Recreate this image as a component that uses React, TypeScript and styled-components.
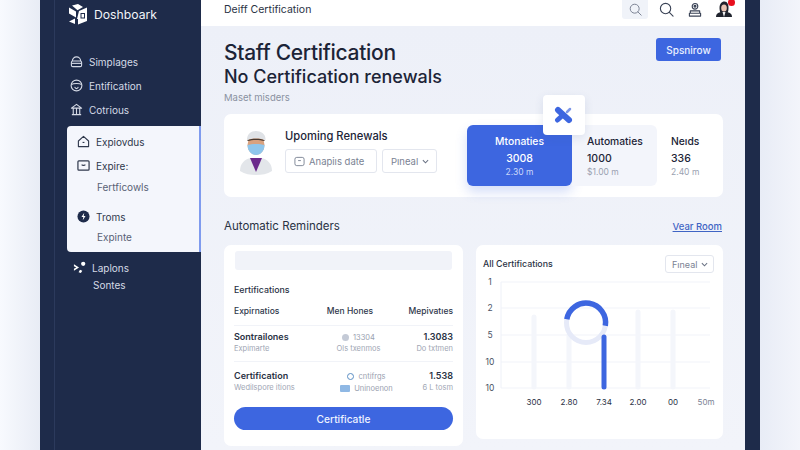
import React from 'react';
import styled, {createGlobalStyle} from "styled-components";

const GlobalStyle = createGlobalStyle`
    html, body {
        margin: 0;
        padding: 0;
        width: 800px;
        height: 450px;
        overflow: hidden;
        background: #f0f3fa;
        font-family: Inter, "Liberation Sans", sans-serif;
    }
    * { box-sizing: border-box; }
    svg { flex: none; }
`

const NAVY = "#1e2b4a";
const BLUE = "#3d66e0";
const INK = "#1c2437";

const Home = () => (
    <svg width="13" height="13" viewBox="0 0 14 14" fill="none" stroke="currentColor" strokeWidth="1.2">
        <path d="M1.5 6.5 7 1.5l5.5 5v6h-11z" strokeLinejoin="round"/>
        <path d="M6 8h2" />
    </svg>
);
const Dome = () => (
    <svg width="13" height="13" viewBox="0 0 14 14" fill="none" stroke="currentColor" strokeWidth="1.2">
        <path d="M2.5 6.5a4.5 4.5 0 0 1 9 0" />
        <rect x="1.5" y="6.5" width="11" height="6" rx="1.5" />
        <path d="M1.5 9h11" />
    </svg>
);
const Gauge = () => (
    <svg width="13" height="13" viewBox="0 0 14 14" fill="none" stroke="currentColor" strokeWidth="1.2">
        <circle cx="7" cy="7" r="5.8" />
        <path d="M1.5 6c2-1.5 9-1.5 11 0M5 8.5c1 2.5 3 2.5 4 0" />
    </svg>
);
const Bank = () => (
    <svg width="13" height="13" viewBox="0 0 14 14" fill="none" stroke="currentColor" strokeWidth="1.2">
        <path d="M1.5 5.5 7 1.5l5.5 4zM2 12.5h10M3.5 6v6M7 6v6M10.5 6v6" strokeLinejoin="round"/>
    </svg>
);
const Inbox = () => (
    <svg width="13" height="13" viewBox="0 0 14 14" fill="none" stroke="currentColor" strokeWidth="1.3">
        <rect x="1" y="2" width="12" height="10" rx="1"/>
        <path d="M5 6c1 1.2 3 1.2 4 0" />
    </svg>
);
const Bolt = () => (
    <svg width="13" height="13" viewBox="0 0 14 14">
        <circle cx="7" cy="7" r="6.5" fill={NAVY}/>
        <path d="M7.8 3 4.8 7.5h2L6.2 11l3-4.5h-2z" fill="#fff"/>
    </svg>
);
const Nodes = () => (
    <svg width="13" height="13" viewBox="0 0 14 14" fill="#fff">
        <circle cx="11" cy="3" r="2.3"/>
        <path d="M1 3.5 6.5 7 1 10.5V8.3L3.5 7 1 5.7zM7.5 9.5l2.5 1-1.5 2.5-2.5-.8z"/>
    </svg>
);
const Logo = () => (
    <svg width="21" height="21" viewBox="0 0 21 21" fill="#fff">
        <path d="M1 3.5 8 7.5v6L1 9.5zM4 1.5 10 0l5 3-5.5 3.2zM11 7l8-3.5V17l-9 3.5V15l-1 0z"/>
        <path d="M1 17.5 7 14.5v5.5z"/>
        <rect x="13" y="9.5" width="3.5" height="4.5" fill="none" stroke={NAVY} strokeWidth="1"/>
    </svg>
);
const Search = ({size = 15, color = "#3a4356"}: {size?: number, color?: string}) => (
    <svg width={size} height={size} viewBox="0 0 16 16" fill="none" stroke={color} strokeWidth="1.2">
        <circle cx="7" cy="7" r="5.5"/>
        <path d="m11 11 4 4" strokeLinecap="round"/>
    </svg>
);
const Person = () => (
    <svg width="14" height="16" viewBox="0 0 15 16" fill="none" stroke="#3a4356" strokeWidth="1.2">
        <circle cx="7.5" cy="4" r="3"/>
        <circle cx="7.5" cy="4" r="1" fill="#3a4356"/>
        <path d="M2.5 9h10v2.5h-10zM1.5 11.5h12v3h-12z" strokeLinejoin="round"/>
    </svg>
);
const UserPhoto = () => (
    <svg width="16" height="17" viewBox="0 0 16 17">
        <path d="M0 16c0-4 3-5 8-5s8 1 8 5z" fill="#20242e"/>
        <path d="M3.5 7c0-4 2-6.5 5-6.5s4 3 4 6.500-1 5-1 5h-7s-1-2-1-5z" fill="#20242e"/>
        <ellipse cx="8" cy="7" rx="2.8" ry="3.5" fill="#e9c4b4"/>
        <path d="M6.5 11h3L8 16z" fill="#f3f3f3"/>
    </svg>
);
const Nurse = () => (
    <svg width="34" height="46" viewBox="0 0 34 46">
        <path d="M1 41c0-8 5-12 11-13h10c6 1 11 5 11 13-5 3-10 4-16 4S6 44 1 41z" fill="#e3e6ea"/>
        <path d="M11 28h12l-6 14z" fill="#6b2a8c"/>
        <ellipse cx="17" cy="15" rx="8.5" ry="10" fill="#d9a27f"/>
        <path d="M8 10C8 4 12 1 17 1s10 3 9.5 9c-5-2-13.5-2-18.500 0z" fill="#dfe2e6"/>
        <path d="M8.500 10c5-1.800 12-1.800 17 0v1c-5-1.500-12-1.500-17 0z" fill="#4a3a30"/>
        <path d="M8.500 15c4-1.500 13-1.500 17 0 0 5.500-3.500 10-8.500 10s-8.500-4.500-8.500-10z" fill="#8fc6ec"/>
    </svg>
);
const Calendar = () => (
    <svg width="11" height="11" viewBox="0 0 12 12" fill="none" stroke="#7a8293" strokeWidth="1">
        <rect x="1" y="1.5" width="10" height="9" rx="2"/>
        <path d="M4.5 5h3"/>
    </svg>
);
const Chevron = () => (
    <svg width="7" height="5" viewBox="0 0 8 5" fill="none" stroke="#6b7385" strokeWidth="1.2">
        <path d="m1 1 3 3 3-3"/>
    </svg>
);
const Cross = () => (
    <svg width="20" height="18" viewBox="0 0 20 18" fill="none" strokeLinecap="round">
        <line x1="4" y1="4" x2="15" y2="14" stroke={BLUE} strokeWidth="6"/>
        <line x1="3.5" y1="14" x2="9" y2="9" stroke={BLUE} strokeWidth="5"/>
        <line x1="13" y1="6" x2="16" y2="3" stroke="#7d97e8" strokeWidth="2.5"/>
    </svg>
);
const Chart = () => (
    <svg width="240" height="150" viewBox="0 0 240 150" fontFamily="Inter, sans-serif" fontSize="8.5" fill="#2a3244">
        {[5, 31, 58, 85, 111].map((y, i) => (
            <g key={y}>
                <line x1="18" x2="227" y1={y} y2={y} stroke="#f1f3f9" strokeWidth="1"/>
                <text x="7" y={y + 3} textAnchor="middle" fill="#4a5264">{["1", "2", "5", "10", "10"][i]}</text>
            </g>
        ))}
        <line x1="18" x2="18" y1="5" y2="111" stroke="#eef1f8"/>
        {[[51, 40], [86, 58], [155, 35], [190, 35]].map(([x, y]) => (
            <line key={x} x1={x} x2={x} y1={y} y2="110" stroke="#f4f6fb" strokeWidth="5" strokeLinecap="round"/>
        ))}
        <circle cx="103" cy="46" r="19.5" fill="none" stroke="#e6eaf8" strokeWidth="5"/>
        <path d="M83.8 42.3A19.5 19.5 0 0 1 122.3 48.8" fill="none" stroke={BLUE} strokeWidth="5.5"/>
        <line x1="121" x2="121" y1="60" y2="110" stroke={BLUE} strokeWidth="5" strokeLinecap="round"/>
        {[["300", 51], ["2.80", 86], ["7.34", 121], ["2.00", 155], ["00", 190]].map(([t, x]) => (
            <text key={t} x={x} y="128" textAnchor="middle" fontSize="8">{t}</text>
        ))}
        <text x="223" y="128" textAnchor="middle" fontSize="8" fill="#7a8293">50m</text>
    </svg>
);

const navTop = [
    {icon: <Dome/>, label: "Simplages"},
    {icon: <Gauge/>, label: "Entification"},
    {icon: <Bank/>, label: "Cotrious"},
];

export default function App() {
    return (
        <>
            <GlobalStyle/>
            <Page>
                <Gutter $from="#f8fafe" $to="#e8ecf5"/>
                <Sidebar>
                    <Brand><Logo/><BrandName>Doshboark</BrandName></Brand>
                    <NavTop>
                        {navTop.map(n => <NavItem key={n.label}>{n.icon}<span>{n.label}</span></NavItem>)}
                    </NavTop>
                    <ActivePanel>
                        <PanelItem><Home/><span>Expiovdus</span></PanelItem>
                        <PanelItem $top={9}><Inbox/><span>Expire:</span></PanelItem>
                        <PanelSub $top={8}>Fertficowls</PanelSub>
                        <PanelItem $top={15}><Bolt/><span>Troms</span></PanelItem>
                        <PanelSub $top={7}>Expinte</PanelSub>
                    </ActivePanel>
                    <NavBottom>
                        <NavItem><Nodes/><span>Laplons</span></NavItem>
                        <NavSub>Sontes</NavSub>
                    </NavBottom>
                </Sidebar>
                <Main>
                    <TopBar>
                        <TopTitle>Deiff Certification</TopTitle>
                        <TopIcons>
                            <SearchChip><Search size={13} color="#7a8293"/></SearchChip>
                            <Search/>
                            <Person/>
                            <Avatar><UserPhoto/><RedDot/></Avatar>
                        </TopIcons>
                    </TopBar>
                    <Content>
                        <Hero>
                            <div>
                                <H1>Staff Certification</H1>
                                <H2>No Certification renewals</H2>
                                <Muted>Maset misders</Muted>
                            </div>
                            <PrimarySmall>Spsnirow</PrimarySmall>
                        </Hero>
                        <StatsCard>
                            <FloatTile><Cross/></FloatTile>
                            <NurseBox><Nurse/></NurseBox>
                            <Renewals>
                                <CardTitle>Upoming Renewals</CardTitle>
                                <Filters>
                                    <Select $w={92}><Calendar/>Anapiıs date</Select>
                                    <Select $w={55} $between>Pıneal<Chevron/></Select>
                                </Filters>
                            </Renewals>
                            <Tiles>
                                <BlueTile>
                                    <b>Mtonaties</b>
                                    <strong>3008</strong>
                                    <small>2.30 m</small>
                                </BlueTile>
                                <GreyTile>
                                    <b>Automaties</b>
                                    <strong>1000</strong>
                                    <small>$1.00 m</small>
                                </GreyTile>
                                <PlainTile>
                                    <b>Neıds</b>
                                    <strong>336</strong>
                                    <small>2.40 m</small>
                                </PlainTile>
                            </Tiles>
                        </StatsCard>
                        <SectionHead>
                            <SectionTitle>Automatic Reminders</SectionTitle>
                            <ViewLink href="#">Vear Room</ViewLink>
                        </SectionHead>
                        <Columns>
                            <TableCard>
                                <GreyBar/>
                                <TableTitle>Eertifications</TableTitle>
                                <HeadRow>
                                    <span>Expirnatios</span>
                                    <HeadMiddle>Men Hones</HeadMiddle>
                                    <span>Mepivatıes</span>
                                </HeadRow>
                                <Row>
                                    <div><RowName>Sontrailones</RowName><RowSub>Expimarte</RowSub></div>
                                    <Middle>
                                        <MidLine><Dot/>13304</MidLine>
                                        <RowSub>Ols txenmos</RowSub>
                                    </Middle>
                                    <Right><RowName>1.3083</RowName><RowSub>Do txtmen</RowSub></Right>
                                </Row>
                                <Row $last>
                                    <div><RowName>Certification</RowName><RowSub>Wedilspore itions</RowSub></div>
                                    <Middle $shift={16}>
                                        <MidLine><Ring/>cntifrgs</MidLine>
                                        <MidLine><Mini/>Uninoenon</MidLine>
                                    </Middle>
                                    <Right><RowName>1.538</RowName><RowSub>6 L tosm</RowSub></Right>
                                </Row>
                                <WideButton>Certificatle</WideButton>
                            </TableCard>
                            <ChartCard>
                                <ChartHead>
                                    <TableTitle as="div">All Certifications</TableTitle>
                                    <Select $w={49} $h={18} $between $tight>Fıneal<Chevron/></Select>
                                </ChartHead>
                                <Chart/>
                            </ChartCard>
                        </Columns>
                    </Content>
                </Main>
                <Strip/>
                <Gutter $from="#e8ecf6" $to="#f3f5fb"/>
            </Page>
        </>
    );
}

const Page = styled.div`
    display: flex;
    width: 800px;
    height: 450px;
    overflow: hidden;
    background: #eef1f8;
`
const Gutter = styled.div<{$from: string, $to: string}>`
    flex: 1;
    background: linear-gradient(90deg, ${props => props.$from}, ${props => props.$to});
`
const Strip = styled.div`
    width: 15px;
    flex: none;
    background: ${NAVY};
`
const Sidebar = styled.aside`
    width: 161px;
    flex: none;
    padding-left: 27px;
    display: flex;
    flex-direction: column;
    color: #fff;
    background: linear-gradient(90deg, ${NAVY} 0, ${NAVY} 14px, #2c3a5c 14px, #2c3a5c 15px, ${NAVY} 15px);
`
const Brand = styled.div`
    display: flex;
    align-items: center;
    gap: 5px;
    height: 28px;
    padding: 0 0 0 1px;
`
const BrandName = styled.span`
    font-size: 12.2px;
    color: #f2f4f8;
`
const NavTop = styled.nav`
    display: flex;
    flex-direction: column;
    gap: 9px;
    padding: 26px 0 0 3px;
`
const NavItem = styled.div`
    display: flex;
    align-items: center;
    gap: 6px;
    height: 15px;
    font-size: 10px;
    color: #d5dae6;
`
const NavBottom = styled.div`
    padding: 8px 0 0 6px;
`
const NavSub = styled.div`
    margin: 4px 0 0 20px;
    font-size: 10px;
    line-height: 13px;
    color: #d5dae6;
`
const ActivePanel = styled.div`
    margin-top: 9px;
    height: 126px;
    flex: none;
    padding: 8px 0 0 10px;
    background: #f4f6fc;
    border-right: 2px solid #7f9bee;
    border-radius: 4px 0 0 4px;
`
const PanelItem = styled.div<{$top?: number}>`
    display: flex;
    align-items: center;
    gap: 6px;
    height: 15px;
    margin-top: ${props => props.$top || 0}px;
    font-size: 10px;
    color: #2f384c;
`
const PanelSub = styled.div<{$top: number}>`
    margin: ${props => props.$top}px 0 0 20px;
    font-size: 10px;
    line-height: 13px;
    color: #596276;
`
const Main = styled.main`
    width: 544px;
    flex: none;
    display: flex;
    flex-direction: column;
    background: #f0f3fa;
`
const TopBar = styled.header`
    height: 26px;
    flex: none;
    display: flex;
    align-items: center;
    justify-content: space-between;
    padding: 0 13px 7px 23px;
    background: #fff;
`
const TopTitle = styled.div`
    font-size: 10.5px;
    color: #2a3244;
`
const TopIcons = styled.div`
    display: flex;
    align-items: center;
    gap: 14px;
`
const SearchChip = styled.div`
    width: 26px;
    height: 19px;
    margin-right: -3px;
    display: flex;
    align-items: center;
    justify-content: center;
    background: #f0f3f9;
    border-radius: 0 0 3px 3px;
`
const Avatar = styled.div`
    position: relative;
    height: 17px;
`
const RedDot = styled.i`
    position: absolute;
    top: -2px;
    right: -3px;
    width: 7px;
    height: 7px;
    border-radius: 50%;
    background: #e8101e;
`
const Content = styled.div`
    flex: 1;
    padding: 0 22px 0 23px;
    display: flex;
    flex-direction: column;
    background: linear-gradient(180deg, #edf0f8, #f2f4fa);
`
const Hero = styled.div`
    display: flex;
    justify-content: space-between;
    align-items: flex-start;
    padding-top: 13px;
`
const H1 = styled.h1`
    margin: 0;
    font-size: 21px;
    line-height: 27px;
    font-weight: 500;
    letter-spacing: -0.3px;
    color: ${INK};
`
const H2 = styled.h2`
    margin: 0;
    font-size: 18px;
    line-height: 22px;
    font-weight: 500;
    color: ${INK};
`
const Muted = styled.div`
    margin-top: 4px;
    font-size: 9.5px;
    line-height: 12px;
    color: #8a91a1;
`
const PrimarySmall = styled.button`
    width: 65px;
    height: 23px;
    margin: -1px 2px 0 0;
    border: 0;
    border-radius: 3px;
    background: ${BLUE};
    color: #eaf0ff;
    font: 500 10px Inter, sans-serif;
`
const StatsCard = styled.section`
    position: relative;
    height: 83px;
    margin-top: 10px;
    padding-left: 15px;
    display: flex;
    align-items: center;
    background: #fff;
    border-radius: 7px;
`
const FloatTile = styled.div`
    position: absolute;
    top: -19px;
    left: 319px;
    width: 42px;
    height: 40px;
    display: flex;
    align-items: center;
    justify-content: center;
    background: #fff;
    border-radius: 4px;
    box-shadow: 0 3px 10px rgba(60, 80, 140, .12);
    z-index: 2;
`
const NurseBox = styled.div`
    display: flex;
    margin-bottom: 6px;
`
const Renewals = styled.div`
    margin: 0 0 9px 12px;
    display: flex;
    flex-direction: column;
    gap: 5px;
`
const CardTitle = styled.div`
    font-size: 11.2px;
    line-height: 15px;
    font-weight: 500;
    color: ${INK};
`
const Filters = styled.div`
    display: flex;
    gap: 5px;
`
const Select = styled.div<{$w: number, $h?: number, $between?: boolean, $tight?: boolean}>`
    width: ${props => props.$w}px;
    height: ${props => props.$h || 24}px;
    padding: 0 ${props => props.$tight ? 6 : 8}px;
    display: flex;
    align-items: center;
    justify-content: ${props => props.$between ? "space-between" : "flex-start"};
    gap: 4px;
    border: 1px solid #e3e6ee;
    border-radius: 3px;
    background: #fff;
    font-size: ${props => props.$tight ? 9 : 9.5}px;
    font-weight: 400;
    white-space: nowrap;
    color: #7a8293;
`
const Tiles = styled.div`
    margin-left: auto;
    width: 256px;
    display: flex;
    height: 61px;
`
const Tile = styled.div`
    display: flex;
    flex-direction: column;
    align-items: flex-start;
    b { font-size: 10.3px; line-height: 14px; font-weight: 500; }
    strong { margin-top: 4px; font-size: 10.5px; line-height: 14px; font-weight: 500; }
    small { font-size: 8.5px; line-height: 12px; color: #9aa1b0; }
`
const BlueTile = styled(Tile)`
    width: 105px;
    padding: 9px 0 0 0;
    align-items: center;
    color: #fff;
    background: ${BLUE};
    border-radius: 6px;
    box-shadow: 0 6px 12px rgba(61, 102, 224, .22);
    small { color: #cbd8fa; }
`
const GreyTile = styled(Tile)`
    width: 85px;
    padding: 9px 0 0 15px;
    color: ${INK};
    background: #f3f5fb;
    border-radius: 0 6px 6px 0;
`
const PlainTile = styled(Tile)`
    padding: 9px 0 0 14px;
    color: ${INK};
`
const SectionHead = styled.div`
    display: flex;
    justify-content: space-between;
    align-items: center;
    margin-top: 20px;
    height: 18px;
`
const SectionTitle = styled.div`
    font-size: 11.5px;
    color: #2a3244;
`
const ViewLink = styled.a`
    margin-right: 1px;
    font-size: 9.5px;
    font-weight: 500;
    color: #3f64c4;
`
const Columns = styled.div`
    display: flex;
    align-items: flex-start;
    gap: 13px;
    margin-top: 10px;
`
const TableCard = styled.section`
    width: 239px;
    height: 201px;
    padding: 6px 10px 0 10px;
    background: #fff;
    border-radius: 7px;
`
const GreyBar = styled.div`
    height: 19px;
    margin: 0 1px 14px;
    background: #f1f3f9;
    border-radius: 3px;
`
const TableTitle = styled.div`
    font-size: 8.8px;
    font-weight: 500;
    line-height: 12px;
    color: #2a3244;
`
const HeadRow = styled.div`
    display: flex;
    justify-content: space-between;
    margin: 9px 0 0;
    padding-bottom: 8px;
    border-bottom: 1px solid #f1f3f8;
    font-size: 8.5px;
    line-height: 12px;
    font-weight: 500;
    color: #2f384c;
`
const HeadMiddle = styled.span`
    margin-left: 12px;
`
const Row = styled.div<{$last?: boolean}>`
    display: grid;
    grid-template-columns: 90px 1fr 60px;
    height: 36px;
    padding-top: ${props => props.$last ? 8 : 5}px;
    border-bottom: ${props => props.$last ? "0" : "1px solid #f1f3f8"};
`
const RowName = styled.div`
    font-size: 9px;
    font-weight: 600;
    line-height: 12px;
    color: #2a3244;
`
const RowSub = styled.div`
    font-size: 7.5px;
    line-height: 12px;
    white-space: nowrap;
    color: #a0a6b4;
`
const Middle = styled.div<{$shift?: number}>`
    display: flex;
    flex-direction: column;
    align-items: center;
    padding-left: ${props => props.$shift || 0}px;
`
const MidLine = styled.div`
    display: flex;
    align-items: center;
    gap: 4px;
    height: 12px;
    font-size: 7.5px;
    color: #9aa1b0;
`
const Dot = styled.i`
    width: 7px;
    height: 7px;
    border-radius: 50%;
    background: #c4cad6;
`
const Ring = styled.i`
    width: 7px;
    height: 7px;
    border-radius: 50%;
    border: 1.5px solid #5b8ec4;
`
const Mini = styled.i`
    width: 10px;
    height: 7px;
    border-radius: 1px;
    background: #8fb8e4;
`
const Right = styled.div`
    text-align: right;
`
const WideButton = styled.button`
    display: block;
    width: 219px;
    height: 23px;
    margin-top: 9px;
    border: 0;
    border-radius: 12px;
    background: ${BLUE};
    color: #eef2ff;
    font: 500 10.2px Inter, sans-serif;
`
const ChartCard = styled.section`
    width: 247px;
    height: 194px;
    padding: 9px 0 0 7px;
    background: #fff;
    border-radius: 7px;
    overflow: hidden;
`
const ChartHead = styled.div`
    display: flex;
    justify-content: space-between;
    align-items: center;
    padding-right: 9px;
    height: 20px;
    margin-bottom: 3px;
`
